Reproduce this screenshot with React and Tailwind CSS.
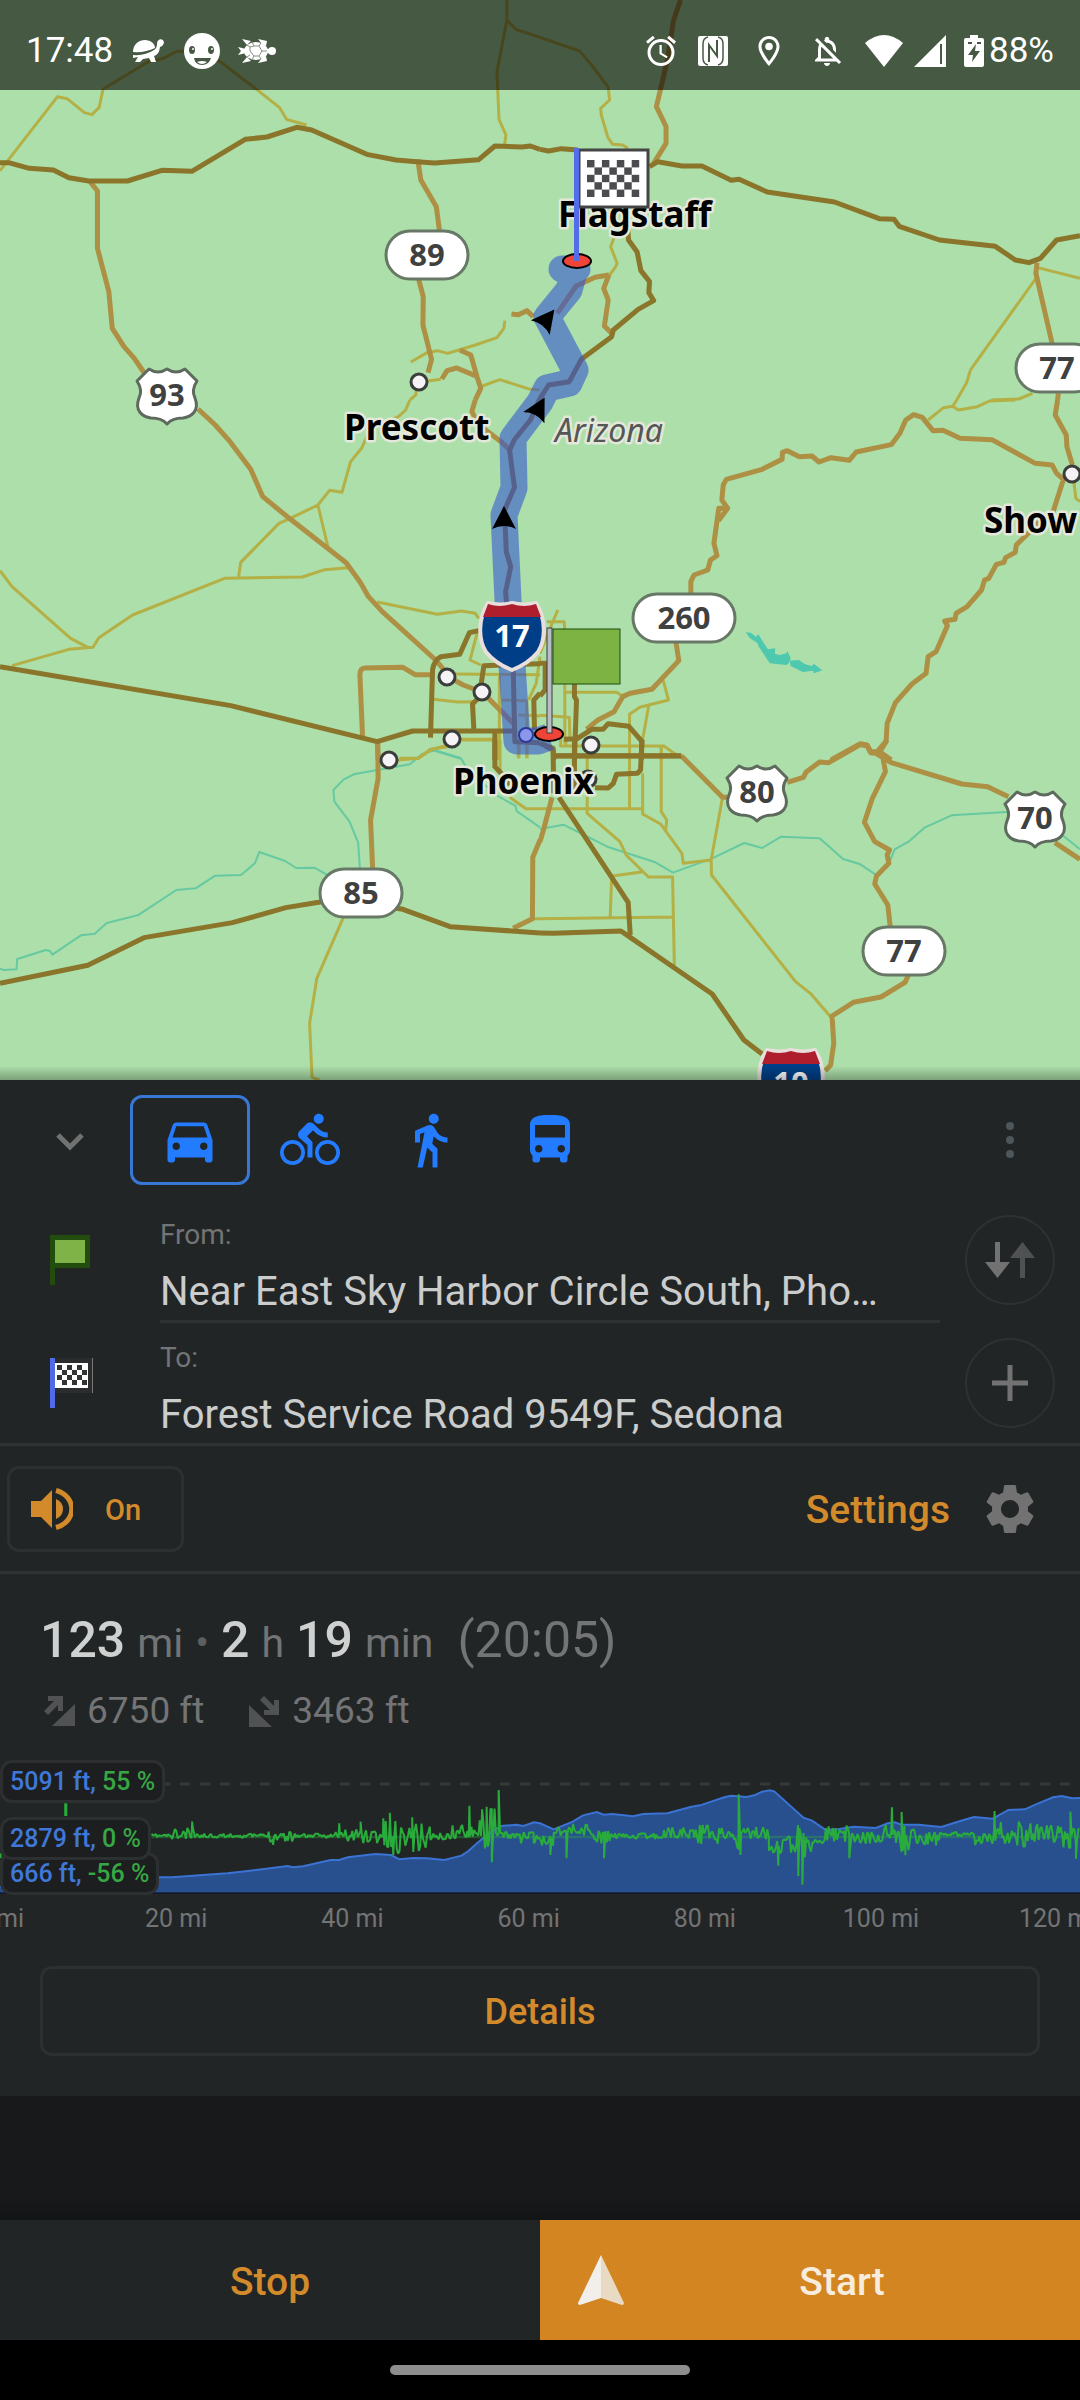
import React, { useState } from "react";
import {
  MdAlarm,
  MdOutlineLocationOn,
  MdOutlineNotificationsOff,
  MdDirectionsCar,
  MdDirectionsBike,
  MdDirectionsWalk,
  MdDirectionsBus,
  MdSettings,
} from "react-icons/md";

// Vector map tiles. Each one is 1568 units wide, x/y is the tile origin on the canvas.
const tiles = [
  {
    x: 0,
    y: 0,
    minor:
      "M0 512L167 290L195 296L245 338L267 344L288 322L299 268L430 185L475 175L515 153L560 155L640 185L690 225L745 268L812 323L832 358L890 375M1472 0L1472 60L1443 215L1449 358L1469 405L1465 436M1472 60L1498 88L1568 112M1193 1086L1240 1058L1270 1052L1300 1060L1380 1035L1443 1013L1463 985L1466 962M1243 1143L1280 1138M1396 1160L1451 1139L1540 1168L1568 1170M1210 1165L1207 1185L1190 1200",
    trunk:
      "M262 546L283 573L283 745L316 875L326 985L360 1040L390 1075L413 1110L440 1150M1213 478L1222 540L1267 620L1276 692M1215 835L1229 890L1228 975L1253 1078L1243 1118M1335 1050L1367 1065L1385 1130L1396 1165L1380 1200M1283 1137L1298 1112L1326 1104L1380 1127M1485 942L1505 944L1530 932L1548 950",
    major:
      "M0 488L25 488L85 505L155 510L200 533L258 543L370 543L470 511L557 514L712 418L775 411L862 382L905 390L1065 463L1150 480L1210 485L1262 489L1390 479L1437 438L1515 441L1540 438L1568 448",
    river: "",
  },
  {
    x: 1568,
    y: 0,
    minor:
      "M0 112L115 153L150 195L198 262L202 300L176 325L178 345L197 412L211 433L240 435L255 445M216 710L205 740L224 790L218 803L200 828M1445 803L1568 835M1440 835L1250 1110L1238 1150L1210 1200M1430 1180L1390 1197L1310 1200",
    trunk:
      "M408 0L388 60L370 180L338 320L366 380L366 430L330 490M200 825L160 832L105 858L50 940M200 825L185 865L198 900L187 978L208 1000M1443 788L1440 820L1488 1035M1505 1180L1503 1200",
    major:
      "M0 448L25 453L62 446L110 450M318 500L342 485L412 498L470 498L555 541L578 538L660 576L855 606L985 656L1028 658L1043 679L1160 720L1322 739L1380 780L1420 788L1453 775L1500 720L1568 707M255 690L257 720L282 756L293 812L318 845L316 878L330 902L285 928L213 990L208 1010L120 1078L85 1145L25 1155L0 1195",
    river: "",
  },
  {
    x: 0,
    y: 1200,
    minor:
      "M0 512L35 560L205 715L255 742M35 797L200 748L270 742L287 713L385 645L652 535L878 531L943 509L1010 503M693 530L699 487L810 370L843 355L923 315L957 271L993 277L1018 185L1050 145L1063 115L1075 85L1157 50M923 315L952 440M1190 0L1178 30L1157 50M1095 606L1270 643L1340 633L1380 640L1390 655M1385 700L1365 780L1396 795M1320 822L1568 824M1258 898L1330 906L1380 905M1450 820L1450 1080M1335 1018L1437 1018M1160 1075L1215 1075L1250 1048L1300 1040M1568 770L1557 850L1535 900M1457 900L1528 902M1505 945L1568 948M1530 900L1530 1075M1507 1025L1507 1075",
    trunk:
      "M575 27L625 75L668 125L728 208L763 290L840 355L1005 488L1045 545L1070 590L1110 635L1265 780L1310 835L1345 855L1400 876L1495 975M1380 0L1370 35L1378 50L1410 90L1455 125L1480 150M1053 1015L1045 825Q1045 805 1060 804L1170 802L1205 824L1255 824M1096 1030L1098 1080",
    major:
      "M0 800L670 917L1095 1025L1198 993L1490 993M1250 1013L1256 810Q1260 780 1280 770L1335 763L1363 698L1400 690M1568 791L1405 797L1396 860L1393 890L1372 912L1376 990M1437 995L1437 1080M1568 880L1550 900L1552 990M1568 -5L1540 60L1493 120L1480 150L1487 210L1494 262L1465 330L1470 455L1483 500L1468 575L1472 620L1490 800L1495 1025L1568 1028",
    river: "M1260 1050L1340 1075",
  },
  {
    x: 1568,
    y: 1200,
    minor:
      "M1127 60L1172 23L1198 19L1215 30L1270 20L1305 3L1380 0M1198 19L1210 0M1550 245L1556 295L1568 305M20 665L70 665L72 690M52 630L35 670L0 760M72 850L72 1030M60 1010L60 1038L360 1038L400 1068M70 876L222 877L240 888M358 842L373 900L290 922L260 943L260 1080M316 915L296 1030M0 946L85 952L87 1015M352 1038L352 1080M137 1060L137 1080",
    trunk:
      "M438 580L438 545L447 525L487 510L495 480L514 467L505 430L519 325L545 325L518 362M545 325L528 300L532 255L541 238L645 208L703 178L704 157L718 152L753 170L790 168L810 186L845 173L898 181L918 156L1020 134L1045 100L1062 60L1085 44L1110 52L1141 92L1170 91L1220 115L1312 119L1438 190L1487 195L1500 220L1520 238L1490 335L1445 370L1418 400L1383 435L1380 457L1352 473L1347 487L1325 493L1303 535L1291 540L1282 570L1240 620L1208 640L1205 658L1175 663L1183 677L1150 755L1127 770L1121 820L1080 852L1032 908L1008 970L1005 1025L987 1055L960 1055L950 1035L930 1031L845 1080M1503 0L1496 45L1528 105L1530 140L1546 195M987 1055L1020 1080M395 728L403 782L325 868L262 880L240 890L215 935L168 960L135 988",
    major:
      "M0 790L15 790L15 870L0 888M100 850L100 890L106 900L100 1080M70 1018L108 1016L150 988L183 988L198 971L258 979L296 1024L294 1080M0 1030L38 1045L40 1080M45 1068L410 1068",
    river: "",
  },
  {
    x: 0,
    y: 2220,
    minor:
      "M1155 60L1215 55L1250 30L1300 15M1340 0H1437M1452 0L1452 95M1505 10V55M1530 10V55M1480 172L1527 206H1568M1547 536H1568M998 530L920 715L899 850L906 1012L928 1020",
    trunk:
      "M1097 0L1098 115L1076 240L1082 385M1568 300L1547 352L1546 536L1490 565",
    major:
      "M0 730L255 676L418 593L675 548L830 503L930 486L1000 480L1170 508L1307 560L1568 579M1437 0L1437 80L1455 100L1480 135",
    river:
      "M1125 85L1190 73L1225 42L1260 32L1340 57L1355 85L1440 165L1497 198L1500 213L1568 262M1125 85L1030 102L998 118L968 150L971 185L1015 245L1040 308L1045 385M0 686L10 690L48 688L50 657L133 630L145 633L152 644L235 586L275 581L310 549L400 526L512 450L568 445L625 407L700 405L740 370L753 336L828 363L860 384L913 383L950 405",
  },
  {
    x: 1568,
    y: 2220,
    minor:
      "M75 0V17M352 17V215L368 240L365 270M260 0V205M137 50V220L232 305L250 345L315 411H385L390 675M298 100V222L350 252L412 340L416 370L497 360M0 206H298M530 172L497 360L498 405L742 725L785 760L845 832M210 408L300 395M208 408L204 530M0 536L390 531",
    trunk:
      "M410 47L530 172L545 172M718 127L765 112L772 97L812 66L838 68L930 14L950 18L960 38L975 40L1008 0M975 40L1020 68L1225 132L1300 140L1360 170M1495 308L1568 358M995 50L1003 95L965 175L942 247L972 305L1015 330L1008 345L1013 370L977 408L972 432L1010 495L1017 560M1070 705L1060 727L990 771L910 787L848 828L853 910L844 975L828 992M35 172L10 270L0 305",
    major:
      "M15 18L38 30L40 160M100 0V150M45 47H410M296 0L292 90L283 100L222 103L213 130L198 144L160 143M55 172L256 487L262 585M0 579L40 580L235 573L262 592L500 762L592 900L645 942",
    river:
      "M0 267L68 254L200 322L335 367L386 398L500 355L593 309L645 324L700 290L812 295L880 357L930 373L975 404M1013 370L1030 328L1070 305L1118 262L1195 226L1355 216M1520 288L1568 328",
  },
];

const layers = [
  { key: "river", color: "#66c9a1", width: 2 },
  { key: "minor", color: "#b4b046", width: 3 },
  { key: "trunk", color: "#ad9044", width: 5 },
  { key: "major", color: "#8a752b", width: 5 },
];

const towns = [
  [419, 382],
  [447, 677],
  [482, 692],
  [452, 739],
  [389, 760],
  [591, 745],
  [588, 779],
  [1072, 474],
];

const ovalShields = [
  { x: 427, y: 255, w: 82, text: "89" },
  { x: 1057, y: 368, w: 82, text: "77" },
  { x: 684, y: 618, w: 102, text: "260" },
  { x: 361, y: 893, w: 82, text: "85" },
  { x: 904, y: 951, w: 82, text: "77" },
];

const usShields = [
  { x: 167, y: 396, text: "93" },
  { x: 757, y: 793, text: "80" },
  { x: 1035, y: 819, text: "70" },
];

const interstates = [
  { x: 512, y: 636, text: "17" },
  { x: 791, y: 1083, text: "10" },
];

const cityLabels = [
  { x: 558, y: 227, text: "Flagstaff" },
  { x: 344, y: 440, text: "Prescott" },
  { x: 453, y: 794, text: "Phoenix" },
  { x: 984, y: 533, text: "Show" },
];

const modes = [
  { id: "car", label: "Driving", Icon: MdDirectionsCar },
  { id: "bike", label: "Cycling", Icon: MdDirectionsBike },
  { id: "walk", label: "Walking", Icon: MdDirectionsWalk },
  { id: "bus", label: "Public transport", Icon: MdDirectionsBus },
];

const elevation =
  "0,440 200,428 467,412 500,412 560,407 660,400 720,393 790,384 835,378 850,382 880,379 960,360 985,360 1010,352 1090,342 1135,345 1160,358 1200,354 1240,355 1290,360 1340,347 1360,333 1385,310 1420,280 1455,258 1500,254 1520,258 1550,247 1568,250 1608,268 1663,245 1693,226 1733,216 1753,224 1778,222 1838,229 1868,222 1938,220 2008,200 2033,196 2103,172 2123,167 2168,171 2193,165 2213,155 2235,151 2248,154 2333,233 2358,242 2398,270 2433,268 2478,260 2543,264 2578,250 2598,247 2618,254 2668,254 2733,261 2798,240 2828,231 2883,236 2928,210 2976,208 3008,193 3058,172 3083,168 3113,175 3136,174";

// Slope envelope: [end of segment, centre, amplitude up, amplitude down]
const slopeSegments = [
  [500, 287, 5, 5],
  [565, 287, 24, 16],
  [780, 287, 6, 6],
  [860, 287, 15, 18],
  [975, 287, 6, 7],
  [1100, 287, 24, 26],
  [1165, 290, 48, 54],
  [1200, 287, 36, 30],
  [1250, 287, 42, 50],
  [1310, 290, 12, 12],
  [1345, 282, 32, 20],
  [1400, 272, 44, 22],
  [1455, 278, 72, 48],
  [1505, 285, 10, 12],
  [1550, 288, 14, 24],
  [1608, 296, 10, 22],
  [1718, 272, 24, 16],
  [1778, 285, 14, 30],
  [1928, 288, 8, 9],
  [2028, 278, 18, 18],
  [2098, 278, 28, 36],
  [2128, 285, 12, 12],
  [2168, 285, 28, 46],
  [2233, 280, 22, 20],
  [2313, 308, 20, 34],
  [2343, 300, 60, 68],
  [2398, 308, 18, 30],
  [2498, 282, 28, 34],
  [2568, 290, 18, 26],
  [2598, 280, 28, 20],
  [2658, 290, 32, 48],
  [2733, 290, 15, 30],
  [2828, 281, 6, 8],
  [2878, 290, 12, 26],
  [2968, 284, 42, 34],
  [3088, 284, 36, 38],
  [3136, 288, 34, 50],
];

const slopePeaks = [
  [558, 245],
  [793, 315],
  [985, 250],
  [1047, 245],
  [1113, 235],
  [1132, 218],
  [1142, 345],
  [1197, 232],
  [1363, 197],
  [1413, 200],
  [1428, 367],
  [1448, 150],
  [1598, 345],
  [1645, 355],
  [1754, 355],
  [2145, 163],
  [2150, 345],
  [2260, 377],
  [2318, 408],
  [2330, 434],
  [2466, 355],
  [2590, 202],
  [2618, 216],
  [2629, 346],
  [2888, 213],
  [3108, 215],
  [3124, 356],
];

const buildSlope = () => {
  const points = [];
  let seed = 11;
  let start = 440;
  slopeSegments.forEach(([end, centre, up, down]) => {
    for (let x = start; x < end; x += 4) {
      seed = (seed * 16807) % 2147483647;
      const r = (seed / 2147483647) * 2 - 1;
      const offset = r < 0 ? r * up : r * down;
      points.push([x, centre + offset]);
    }
    start = end;
  });
  slopePeaks.forEach((peak) => points.push(peak));
  points.sort((a, b) => a[0] - b[0]);
  return points.map(([x, y]) => `${x},${Math.round(y)}`).join(" ");
};

const slope = buildSlope();

const NavArrow = ({ x, y, angle }) => (
  <path
    transform={`translate(${x} ${y}) rotate(${angle})`}
    d="M0-12L12 11Q0 5-12 11Z"
    fill="#000"
  />
);

const MapView = () => (
  <svg viewBox="0 0 1080 1080" className="block w-full" role="img" aria-label="Route map">
    <defs>
      <linearGradient id="mapShade" x1="0" y1="0" x2="0" y2="1">
        <stop offset="0" stopColor="#000" stopOpacity="0" />
        <stop offset="1" stopColor="#000" stopOpacity="0.28" />
      </linearGradient>
    </defs>
    <rect width="1080" height="1080" fill="#acdfa9" />

    <g transform="scale(0.34439 0.33333)">
      {layers.map((layer) => (
        <g
          key={layer.key}
          fill="none"
          stroke={layer.color}
          strokeWidth={layer.width}
          strokeLinejoin="round"
        >
          {tiles.map((tile, index) => (
            <g key={index} transform={`translate(${tile.x} ${tile.y})`}>
              <path d={tile[layer.key]} vectorEffect="non-scaling-stroke" />
            </g>
          ))}
        </g>
      ))}
      <path
        transform="translate(1568 1200)"
        d="M597 697L612 698L627 710L634 703L650 730L662 748L683 745L682 762L697 765L716 760L718 752L728 775L722 790L716 795L667 790L634 738L632 730L610 715ZM725 782L752 780L770 793L790 798L795 791L820 811L795 820L793 812L763 816L728 798Z"
        fill="#4fc8b0"
      />
    </g>

    {towns.map(([x, y]) => (
      <circle key={`${x}-${y}`} cx={x} cy={y} r="8" fill="#f6f3f6" stroke="#3a3d3a" strokeWidth="3" />
    ))}

    {/* Place names */}
    <g
      fontFamily="'Noto Sans', sans-serif"
      stroke="#e4e8da"
      strokeWidth="5"
      strokeLinejoin="round"
      className="[paint-order:stroke]"
    >
      {cityLabels.map((city) => (
        <text key={city.text} x={city.x} y={city.y} fontSize="35" fontWeight="700" fill="#000">
          {city.text}
        </text>
      ))}
      <text x="555" y="442" fontSize="32" fontStyle="italic" fill="#555755">
        Arizona
      </text>
    </g>

    {/* Route */}
    <g opacity="0.58" fill="none" stroke="#3255d1" strokeWidth="27" strokeLinejoin="round">
      <path d="M549 737L538 741L517 741L512 665L508 600L504 515L514 488L513 438L540 402L547 388L569 383L575 370L547 317L569 290L577 261" />
      <path d="M577 269L562 269" strokeLinecap="round" />
    </g>
    <NavArrow x={504} y={518} angle={0} />
    <NavArrow x={539} y={408} angle={28} />
    <NavArrow x={547} y={319} angle={38} />

    {/* Road shields */}
    <g fontFamily="'Noto Sans', sans-serif" fontSize="31" fontWeight="700" textAnchor="middle">
      {ovalShields.map((shield) => (
        <g key={`${shield.x}-${shield.y}`} transform={`translate(${shield.x} ${shield.y})`}>
          <rect
            x={-shield.w / 2}
            y="-24"
            width={shield.w}
            height="48"
            rx="24"
            fill="#fff"
            stroke="#687866"
            strokeWidth="3"
          />
          <text y="11" fill="#3f4040">
            {shield.text}
          </text>
        </g>
      ))}
      {usShields.map((shield) => (
        <g key={shield.text} transform={`translate(${shield.x} ${shield.y})`}>
          <path
            d="M-18-27Q-9-21 0-27Q9-21 18-27L30-15Q24-6 28 2C33 15 24 21 16 22Q5 22 0 28Q-5 22-16 22C-24 21-33 15-28 2Q-24-6-30-15Z"
            fill="#fff"
            stroke="#5f6a5e"
            strokeWidth="3"
            strokeLinejoin="round"
          />
          <text y="10" fill="#3f4040">
            {shield.text}
          </text>
        </g>
      ))}
      {interstates.map((shield) => (
        <g key={shield.text} transform={`translate(${shield.x} ${shield.y})`}>
          <path
            d="M-24-33Q-12-30 0-33Q12-30 24-33C34-18 34 4 26 16Q16 28 0 34Q-16 28-26 16C-34 4-34-18-24-33Z"
            fill="#003f87"
            stroke="#e8dfdc"
            strokeWidth="4"
          />
          <path d="M-24-32Q-12-28 0-32Q12-28 24-32L29-19H-29Z" fill="#ae1e2d" />
          <text y="11" fill="#fff">
            {shield.text}
          </text>
        </g>
      ))}
    </g>

    {/* Start point */}
    <circle cx="526" cy="735" r="7" fill="#8b97ea" stroke="#2b3a9c" strokeWidth="2" />
    <ellipse cx="549" cy="734" rx="14" ry="7" fill="#f04438" stroke="#000" strokeWidth="2" />
    <rect x="547" y="628" width="5" height="105" fill="#b9bcc4" stroke="#3b3b3b" />
    <rect x="553" y="629" width="67" height="55" fill="#7cb342" stroke="#1f4d0f" strokeWidth="1" />

    {/* Finish point */}
    <ellipse cx="577" cy="261" rx="14" ry="7" fill="#f04438" stroke="#000" strokeWidth="2" />
    <rect x="579" y="150" width="69" height="57" fill="#fff" stroke="#454545" strokeWidth="3" />
    <g fill="#4c4c50">
      {Array.from({ length: 35 }, (_, i) => i)
        .filter((i) => ((i % 7) + Math.floor(i / 7)) % 2 === 0)
        .map((i) => (
          <rect
            key={i}
            x={587 + (i % 7) * 7.45}
            y={160 + Math.floor(i / 7) * 7.4}
            width="7.5"
            height="7.4"
          />
        ))}
    </g>
    <rect x="574" y="148" width="5" height="113" fill="#536dea" />

    <rect y="1066" width="1080" height="14" fill="url(#mapShade)" />
  </svg>
);

const StatusBar = () => (
  <header className="absolute inset-x-0 top-0 flex h-[90px] items-center justify-between bg-black/60 px-[26px] pt-3 text-[35px] leading-10 text-white">
    <div className="flex items-center">
      <span>17:48</span>
      <svg viewBox="0 0 32 24" className="ml-[19px] h-6 w-8" fill="#fff">
        <path d="M1 13C1 5 7 1 13 1S23 5 23 9Q13 14 1 13Z" />
        <path d="M1 16Q13 17 22 11Q25 9 25 5C25-1 32-1 32 4Q31 7 28 8Q27 16 22 17L24 23H19L17 19L11 20L8 23H3L6 18L1 19Z" />
      </svg>
      <svg viewBox="0 0 36 36" className="ml-5 size-9">
        <circle cx="18" cy="18" r="18" fill="#fff" />
        <ellipse cx="8" cy="17" rx="3" ry="4" fill="#465944" />
        <ellipse cx="27" cy="17" rx="3" ry="4" fill="#465944" />
        <circle cx="9" cy="16" r="1" fill="#fff" />
        <circle cx="28" cy="16" r="1" fill="#fff" />
        <path d="M10 25H27Q25 32 18 32T10 25Z" fill="#465944" />
        <path d="M13 29Q18 27 23 29Q18 33 13 29Z" fill="#fff" />
      </svg>
      <svg viewBox="0 0 38 26" className="ml-[18px] h-[26px] w-[38px]" fill="#fff">
        <ellipse cx="18" cy="13" rx="12" ry="9" />
        <circle cx="34" cy="13" r="4" />
        <path d="M28 11H34V15H28ZM24 6L20 1L29 3L28 8ZM24 20L20 25L29 23L28 18ZM9 7L4 1L13 3ZM9 19L4 25L13 23ZM8 11L0 9L3 13L0 17L8 15Z" />
        <path
          d="M12 9L16 8H21L24 13L21 18H16L12 13ZM12 9L9 7M12 17L9 19M24 13H29M16 8L14 4M21 8L23 5M16 18L14 22M21 18L23 21"
          fill="none"
          stroke="#869183"
          strokeWidth="1"
        />
      </svg>
    </div>
    <div className="flex items-center">
      <MdAlarm className="size-9" />
      <svg viewBox="0 0 30 30" className="ml-[19px] size-[30px]">
        <rect width="30" height="30" rx="2" fill="#fff" />
        <path
          d="M10 1Q5 2 5 8V22Q5 28 10 29M20 1Q25 2 25 8V22Q25 28 20 29"
          fill="none"
          stroke="#465944"
          strokeWidth="1.5"
        />
        <path d="M11 26V9L19 20V4" fill="none" stroke="#465944" strokeWidth="2" />
      </svg>
      <MdOutlineLocationOn className="ml-[23px] size-9" />
      <MdOutlineNotificationsOff className="ml-[22px] size-9" />
      <svg viewBox="0 0 38 32" className="ml-5 h-8 w-[38px]" fill="#fff">
        <path d="M0 8Q19-8 38 8L19 32Z" />
      </svg>
      <svg viewBox="0 0 32 32" className="ml-[11px] size-8" fill="#fff">
        <path d="M32 0V32H0Z" />
        <path d="M27 9V29" stroke="#465944" strokeWidth="2" />
      </svg>
      <svg viewBox="0 0 20 32" className="ml-[18px] h-8 w-5">
        <path d="M6 0H14V3H18Q20 3 20 5V30Q20 32 18 32H2Q0 32 0 30V5Q0 3 2 3H6Z" fill="#fff" />
        <path d="M4 8H8M13 8H17" stroke="#465944" strokeWidth="2" />
        <path d="M12 9L4 20H9L8 27L16 16H11Z" fill="#465944" />
      </svg>
      <span className="ml-[5px]">88%</span>
    </div>
  </header>
);

const StartFlag = () => (
  <svg viewBox="0 0 40 50" className="h-[50px] w-10">
    <path d="M0 0H40V33H5V50H0Z" fill="#224d0e" />
    <rect x="5" y="5" width="30" height="23" fill="#7fb347" />
  </svg>
);

const FinishFlag = () => (
  <svg viewBox="0 0 43 50" className="h-[50px] w-[43px]">
    <rect x="5" width="37" height="35" fill="#2b2c2e" />
    <rect x="42" width="1" height="35" fill="#777" />
    <rect x="5" y="5" width="33" height="25" fill="#fff" />
    <g fill="#333">
      {Array.from({ length: 24 }, (_, i) => i)
        .filter((i) => ((i % 6) + Math.floor(i / 6)) % 2 === 0)
        .map((i) => (
          <rect key={i} x={7 + (i % 6) * 5} y={7 + Math.floor(i / 6) * 5} width="5" height="5" />
        ))}
    </g>
    <rect width="5" height="50" fill="#4f6bec" />
  </svg>
);

const ElevationChart = () => (
  <div className="relative mt-2">
    <svg viewBox="0 0 1080 200" className="block w-full" role="img" aria-label="Elevation and slope">
      <path d="M0 44H1080" stroke="#353939" strokeWidth="3" strokeDasharray="10 10" />
      <g transform="scale(0.34439 0.33333)">
        <polygon points={`${elevation} 3136,460 0,460`} fill="#284f8e" />
        <polyline
          points={elevation}
          fill="none"
          stroke="#3a73d4"
          strokeWidth="2"
          vectorEffect="non-scaling-stroke"
        />
        <path d="M440 291H3136" stroke="#2cae3e" strokeOpacity="0.35" strokeWidth="8" />
        <polyline
          points={slope}
          fill="none"
          stroke="#2aac3d"
          strokeWidth="2"
          strokeLinejoin="bevel"
          vectorEffect="non-scaling-stroke"
        />
        <path d="M191 190V228" stroke="#2aac3d" strokeWidth="9" />
        <path d="M0 340V355" stroke="#2aac3d" strokeWidth="9" />
      </g>
      <path d="M0 153H1080" stroke="#05070f" strokeWidth="1" />
      <g fontFamily="Roboto, sans-serif" fontSize="25" fill="#727475" textAnchor="middle">
        {[0, 20, 40, 60, 80, 100, 120].map((mile) => (
          <text key={mile} x={mile * 8.81} y="187">
            {mile} mi
          </text>
        ))}
      </g>
    </svg>
    <ul className="text-[25px] leading-9 font-medium text-[#3f78d8]">
      <li className="absolute top-28 left-0 rounded-xl border-3 border-[#2c3031] bg-[#1c1e20] px-[7px] pt-px">
        666 ft, <span className="text-[#37a744]">-56 %</span>
      </li>
      <li className="absolute top-[77px] left-0 rounded-xl border-3 border-[#2c3031] bg-[#1c1e20] px-[7px] pt-px">
        2879 ft, <span className="text-[#37a744]">0 %</span>
      </li>
      <li className="absolute top-5 left-0 rounded-xl border-3 border-[#2c3031] bg-[#1c1e20] px-[7px] pt-px">
        5091 ft, <span className="text-[#37a744]">55 %</span>
      </li>
    </ul>
  </div>
);

const App = () => {
  const [mode, setMode] = useState("car");
  const [voice, setVoice] = useState(true);

  return (
    <div className="flex min-h-screen flex-col overflow-hidden bg-[#17191a] font-[Roboto,sans-serif]">
      <div className="relative">
        <MapView />
        <StatusBar />
      </div>

      <main className="bg-[#222526]">
        {/* Transport modes */}
        <div className="flex h-[120px] items-center">
          <button type="button" aria-label="Collapse" className="flex w-[130px] justify-center pt-1 pl-[10px] text-[#707272]">
            <svg viewBox="0 0 28 18" className="h-[18px] w-7">
              <path d="M2 2L14 14L26 2" fill="none" stroke="currentColor" strokeWidth="5" />
            </svg>
          </button>
          {modes.map(({ id, label, Icon }) => (
            <button
              key={id}
              type="button"
              aria-label={label}
              aria-pressed={mode === id}
              onClick={() => setMode(id)}
              className={`flex h-[90px] w-[120px] items-center justify-center rounded-xl border-3 text-[#237bff] ${
                mode === id ? "border-[#3877d6]" : "border-transparent"
              }`}
            >
              <Icon className="size-[60px]" />
            </button>
          ))}
          <button type="button" aria-label="More" className="mr-[25px] ml-auto flex w-[90px] justify-center text-[#4b575b]">
            <svg viewBox="0 0 8 38" className="h-[38px] w-2" fill="currentColor">
              <circle cx="4" cy="5" r="4" />
              <circle cx="4" cy="19" r="4" />
              <circle cx="4" cy="33" r="4" />
            </svg>
          </button>
        </div>

        {/* From / to */}
        <div className="flex">
          <div className="flex w-40 items-center pb-[3px] pl-[50px]">
            <StartFlag />
          </div>
          <button type="button" className="min-w-0 flex-1 border-b-3 border-[#2e3233] pt-[17px] pb-px text-left">
            <span className="block text-[28px] leading-9 text-[#727475]">From:</span>
            <span className="mt-3 block truncate text-[40px] leading-[54px] text-[#cbcccc]">
              Near East Sky Harbor Circle South, Pho…
            </span>
          </button>
          <div className="flex w-[140px] items-center pb-[3px] pl-[25px]">
            <button
              type="button"
              aria-label="Swap start and destination"
              className="flex size-[90px] items-center justify-center rounded-full border-2 border-[#2e3132]"
            >
              <svg viewBox="0 0 50 36" className="h-9 w-[50px]">
                <path d="M10 0H15V20H25L12.500 36L0 20H10Z" fill="#727272" />
                <path d="M35 36H40V16H50L37.500 0L25 16H35Z" fill="#4f5152" />
              </svg>
            </button>
          </div>
        </div>
        <div className="flex border-b-3 border-[#2e3233]">
          <div className="flex w-40 items-center pl-[50px]">
            <FinishFlag />
          </div>
          <button type="button" className="min-w-0 flex-1 pt-[17px] pb-px text-left">
            <span className="block text-[28px] leading-9 text-[#727475]">To:</span>
            <span className="mt-3 block truncate text-[40px] leading-[54px] text-[#cbcccc]">
              Forest Service Road 9549F, Sedona
            </span>
          </button>
          <div className="flex w-[140px] items-center pl-[25px]">
            <button
              type="button"
              aria-label="Add stop"
              className="flex size-[90px] items-center justify-center rounded-full border-2 border-[#2e3132]"
            >
              <svg viewBox="0 0 36 36" className="size-9">
                <path d="M18 0V36M0 18H36" stroke="#727272" strokeWidth="5" />
              </svg>
            </button>
          </div>
        </div>

        {/* Voice and settings */}
        <div className="flex h-32 items-center justify-between border-b-3 border-[#2e3233] pr-10 pl-[7px] font-medium text-[#d38a2b]">
          <button
            type="button"
            aria-pressed={voice}
            onClick={() => setVoice(!voice)}
            className="flex h-[86px] w-[177px] items-center rounded-xl border-3 border-[#2c3031] pl-[21px]"
          >
            <svg viewBox="0 0 42 42" className="size-[42px]" fill="currentColor">
              <path d="M0 13H10L21 2V40L10 29H0ZM25 11Q32 14 32 21T25 31Z" />
              <path d="M25 2.500C46 8 46 34 25 39.500" fill="none" stroke="currentColor" strokeWidth="5" />
            </svg>
            <span className="ml-8 pt-0.5 text-[29px] leading-9">{voice ? "On" : "Off"}</span>
          </button>
          <button type="button" className="flex items-center gap-[30px]">
            <span className="pt-0.5 text-[39px] leading-10">Settings</span>
            <MdSettings className="size-[60px] text-[#727272]" />
          </button>
        </div>

        {/* Route summary */}
        <section className="pt-9">
          <p className="flex h-[60px] items-baseline gap-3 pl-10 text-[41px] leading-[60px] text-[#727475]">
            <b className="text-[50px] font-medium text-[#cfd0d0]">123</b>
            <span>mi</span>
            <span className="text-[#5c5e5f]">•</span>
            <b className="text-[50px] font-medium text-[#cfd0d0]">2</b>
            <span>h</span>
            <b className="text-[50px] font-medium text-[#cfd0d0]">19</b>
            <span>min</span>
            <span className="ml-3 text-[50px]">(20:05)</span>
          </p>
          <p className="mt-5 flex items-center pl-11 text-[37px] leading-[42px] text-[#727475]">
            <svg viewBox="0 0 31 30" className="h-[30px] w-[31px]" fill="#505253">
              <path d="M31 8V30H8ZM4 0H19V15H14V9L4 19L0 15L10 5H4Z" />
            </svg>
            <span className="ml-3">6750 ft</span>
            <svg viewBox="0 0 31 31" className="ml-[45px] size-[31px]" fill="#505253">
              <path d="M0 9V31H23ZM15 0L25 10V4H30V19H15V14H21L11 4Z" />
            </svg>
            <span className="ml-3">3463 ft</span>
          </p>
          <ElevationChart />
        </section>

        <div className="px-10 pt-[26px] pb-10">
          <button
            type="button"
            className="h-[90px] w-full rounded-xl border-3 border-[#2c3031] pt-0.5 text-[36px] font-medium text-[#d38a2b]"
          >
            Details
          </button>
        </div>
      </main>

      <div className="flex-1 bg-linear-to-b from-[#17191a] from-80% to-[#121415]" />

      <div className="flex h-[120px] text-[39px] font-medium">
        <button type="button" className="w-1/2 bg-[#222526] pt-1 text-[#d38a2b]">
          Stop
        </button>
        <button type="button" className="flex w-1/2 items-center bg-[#d28521] pr-5 pl-[38px] text-[#f7ecdd]">
          <svg viewBox="0 0 46 50" className="h-[50px] w-[46px]">
            <path d="M23 0L0 48Q0 50 2 50L23 43Z" fill="#f2efeb" />
            <path d="M23 0L46 48Q46 50 44 50L23 43Z" fill="#e8dac3" />
          </svg>
          <span className="flex-1 pt-1 text-center">Start</span>
        </button>
      </div>
      <div className="flex h-[60px] items-center justify-center bg-black">
        <div className="h-[10px] w-[300px] rounded-full bg-[#8e8e8e]" />
      </div>
    </div>
  );
};

export default App;
